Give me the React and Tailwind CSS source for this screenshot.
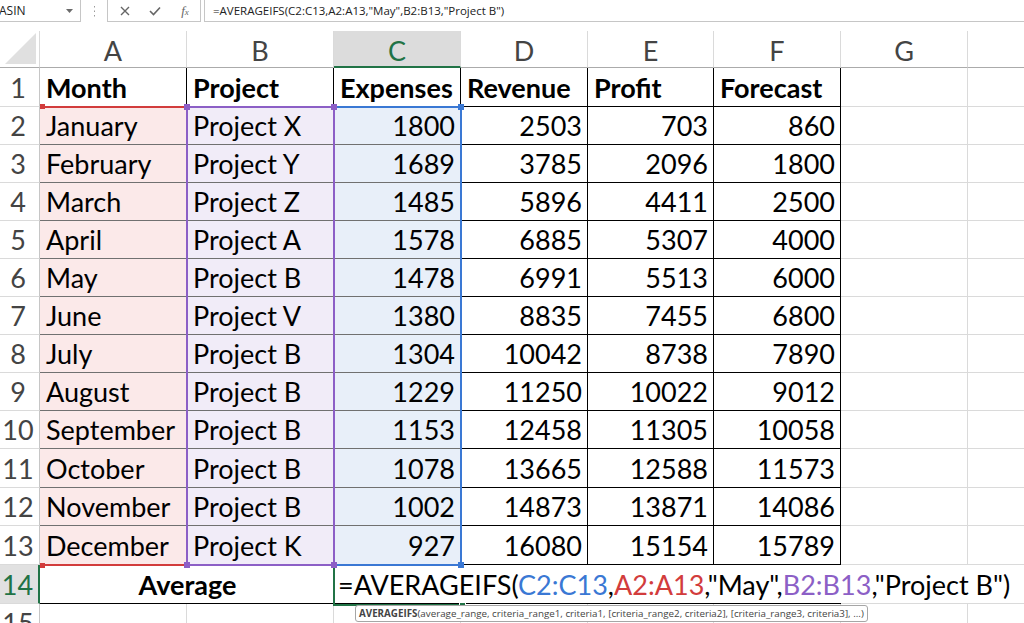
import React from "react";

const data = [
  ["January", "Project X", 1800, 2503, 703, 860],
  ["February", "Project Y", 1689, 3785, 2096, 1800],
  ["March", "Project Z", 1485, 5896, 4411, 2500],
  ["April", "Project A", 1578, 6885, 5307, 4000],
  ["May", "Project B", 1478, 6991, 5513, 6000],
  ["June", "Project V", 1380, 8835, 7455, 6800],
  ["July", "Project B", 1304, 10042, 8738, 7890],
  ["August", "Project B", 1229, 11250, 10022, 9012],
  ["September", "Project B", 1153, 12458, 11305, 10058],
  ["October", "Project B", 1078, 13665, 12588, 11573],
  ["November", "Project B", 1002, 14873, 13871, 14086],
  ["December", "Project K", 927, 16080, 15154, 15789],
];

const rowH = [
  "h-[38px]", "h-[38px]", "h-[38px]", "h-[38px]", "h-[38px]", "h-[38px]",
  "h-[38px]", "h-[38px]", "h-[38px]", "h-[39px]", "h-[38px]", "h-[39px]",
];

function TopBar() {
  return (
    <div className="flex h-[22px] items-stretch bg-white font-['Open_Sans',sans-serif] text-[#222]">
      <div className="w-[81px] border-r border-b border-[#c6c6c6] flex items-center justify-between pr-[7px]">
        <span className="text-[12px] leading-none -ml-[1px]">ASIN</span>
        <svg width="7" height="4" viewBox="0 0 7 4">
          <path d="M0 0 L7 0 L3.5 4 Z" fill="#6b6b6b" />
        </svg>
      </div>
      <div className="w-[26px] flex items-center justify-center">
        <svg width="3" height="11" viewBox="0 0 3 11">
          <rect x="1" y="0" width="1" height="1.5" fill="#9a9a9a" />
          <rect x="1" y="4.5" width="1" height="1.5" fill="#9a9a9a" />
          <rect x="1" y="9" width="1" height="1.5" fill="#9a9a9a" />
        </svg>
      </div>
      <div className="w-[94px] border-l border-r border-b border-[#c6c6c6] flex items-center">
        <div className="w-[32px] flex justify-center pl-[2px]">
          <svg width="10" height="10" viewBox="0 0 10 10">
            <path d="M1 1 L9 9 M9 1 L1 9" stroke="#666" strokeWidth="1.4" />
          </svg>
        </div>
        <div className="w-[30px] flex justify-center">
          <svg width="12" height="10" viewBox="0 0 12 10">
            <path d="M1 5 L4.5 8.5 L11 1.5" stroke="#666" strokeWidth="1.6" fill="none" />
          </svg>
        </div>
        <div className="w-[30px] flex justify-center items-center text-[#666] font-['Liberation_Serif',serif] italic leading-none">
          <span className="text-[13px]">f</span>
          <span className="text-[9px] mt-[4px]">x</span>
        </div>
      </div>
      <div className="flex-1 ml-[3px] border-l border-b border-[#c6c6c6] flex items-center pl-[8px]">
        <span className="text-[11.5px] leading-none whitespace-nowrap">
          =AVERAGEIFS(C2:C13,A2:A13,"May",B2:B13,"Project B")
        </span>
      </div>
    </div>
  );
}

function HeaderRow() {
  const base =
    "h-[37px] border-r border-r-[#dadada] border-b border-b-[#ababab] flex items-center justify-center pt-[3px] text-[#444]";
  return (
    <div className="flex h-[37px] text-[27px] leading-none">
      <div className="w-[40px] h-[37px] border-r border-r-[#dadada] border-b border-b-[#ababab] flex items-end justify-end pr-[3px] pb-[3px]">
        <svg width="31" height="31" viewBox="0 0 31 31">
          <path d="M31 0 L31 31 L0 31 Z" fill="#e0e0e0" />
        </svg>
      </div>
      <div className={"w-[147px] " + base}>A</div>
      <div className={"w-[147px] " + base}>B</div>
      <div className="w-[127px] h-[37px] bg-[#dcdcdc] border-r border-r-[#dadada] border-b-2 border-b-[#217346] flex items-center justify-center pt-[4px] text-[#217346]">
        C
      </div>
      <div className={"w-[127px] " + base}>D</div>
      <div className={"w-[126px] " + base}>E</div>
      <div className={"w-[127px] " + base}>F</div>
      <div className={"w-[127px] " + base}>G</div>
      <div className="flex-1 h-[37px] border-b border-b-[#ababab]"></div>
    </div>
  );
}

function RowHead({ n, h }) {
  return (
    <div
      className={
        "w-[40px] " +
        h +
        " border-r border-r-[#c6c6c6] border-b border-b-[#dadada] flex items-center justify-center pr-[3px] text-[#444]"
      }
    >
      {n}
    </div>
  );
}

function Row1() {
  const c = "h-[39px] border-r border-b border-black flex items-center pl-[6px] font-bold";
  return (
    <div className="flex h-[39px] text-[27px] leading-none">
      <RowHead n={1} h="h-[39px]" />
      <div className={"w-[147px] " + c}>Month</div>
      <div className={"w-[147px] " + c}>Project</div>
      <div className={"w-[127px] " + c}>Expenses</div>
      <div className={"w-[127px] " + c}>Revenue</div>
      <div className={"w-[126px] " + c}>Profit</div>
      <div className={"w-[127px] " + c}>Forecast</div>
      <div className="w-[127px] h-[39px] border-r border-b border-[#dadada]"></div>
      <div className="flex-1 h-[39px] border-b border-[#dadada]"></div>
    </div>
  );
}

function DataRow({ r, i }) {
  const h = rowH[i];
  const num = "border-r border-b border-black flex items-center justify-end pr-[5px]";
  return (
    <div className={"flex text-[27px] leading-none " + h}>
      <RowHead n={i + 2} h={h} />
      <div className={"w-[147px] bg-[#fbe9e9] border-r border-b border-[#707070] flex items-center pl-[6px] " + h}>
        {r[0]}
      </div>
      <div className={"w-[147px] bg-[#f1ecf8] border-r border-b border-[#707070] flex items-center pl-[6px] " + h}>
        {r[1]}
      </div>
      <div className={"w-[127px] bg-[#e8eff9] border-r border-b border-[#707070] flex items-center justify-end pr-[5px] " + h}>
        {r[2]}
      </div>
      <div className={"w-[127px] " + num + " " + h}>{r[3]}</div>
      <div className={"w-[126px] " + num + " " + h}>{r[4]}</div>
      <div className={"w-[127px] " + num + " " + h}>{r[5]}</div>
      <div className={"w-[127px] border-r border-b border-[#dadada] " + h}></div>
      <div className={"flex-1 border-b border-[#dadada] " + h}></div>
    </div>
  );
}

function Row14() {
  return (
    <div className="flex h-[39px] text-[27px] leading-none">
      <div className="w-[40px] h-[39px] bg-[#e1e1e1] border-r-2 border-r-[#217346] border-b border-b-[#dadada] flex items-center justify-center pr-[3px] text-[#217346]">
        14
      </div>
      <div className="w-[294px] h-[39px] border-r border-b border-black flex items-center justify-center font-bold pl-[2px]">
        Average
      </div>
      <div className="w-[127px] h-[39px] border-b border-black flex items-center pl-[4px]">
        <span className="relative z-10 whitespace-nowrap">
          =AVERAGEIFS(
          <span className="text-[#3a78d4]">C2:C13</span>,
          <span className="text-[#d23c3c]">A2:A13</span>,"May",
          <span className="text-[#8c5fc6]">B2:B13</span>,"Project B")
        </span>
      </div>
      <div className="w-[127px] h-[39px] border-b border-black"></div>
      <div className="w-[126px] h-[39px] border-b border-black"></div>
      <div className="w-[127px] h-[39px] border-b border-black"></div>
      <div className="w-[127px] h-[39px] border-b border-[#dadada]"></div>
      <div className="flex-1 h-[39px] border-b border-[#dadada]"></div>
    </div>
  );
}

function Row15() {
  return (
    <div className="flex h-[38px] text-[27px] leading-none">
      <RowHead n={15} h="h-[38px]" />
      <div className="w-[147px] h-[38px] border-r border-b border-[#dadada]"></div>
      <div className="w-[147px] h-[38px] border-r border-b border-[#dadada]"></div>
      <div className="w-[127px] h-[38px] border-r border-b border-[#dadada]"></div>
      <div className="w-[127px] h-[38px] border-r border-b border-[#dadada]"></div>
      <div className="w-[126px] h-[38px] border-r border-b border-[#dadada]"></div>
      <div className="w-[127px] h-[38px] border-r border-b border-[#dadada]"></div>
      <div className="w-[127px] h-[38px] border-r border-b border-[#dadada]"></div>
      <div className="flex-1 h-[38px] border-b border-[#dadada]"></div>
    </div>
  );
}

function Corners({ color }) {
  const s = "absolute w-[6px] h-[6px] " + color;
  return (
    <>
      <div className={s + " -left-[4px] -top-[4px]"} />
      <div className={s + " -right-[4px] -top-[4px]"} />
      <div className={s + " -left-[4px] -bottom-[4px]"} />
      <div className={s + " -right-[4px] -bottom-[4px]"} />
    </>
  );
}

export default function App() {
  return (
    <div className="w-[1024px] h-[623px] overflow-hidden bg-white font-['Lato',sans-serif] text-black">
      <TopBar />
      <div className="h-[9px]" />
      <div className="relative">
        <HeaderRow />
        <Row1 />
        {data.map((r, i) => (
          <DataRow key={i} r={r} i={i} />
        ))}
        <Row14 />
        <Row15 />

        {/* active cell C14 */}
        <div className="absolute left-[333px] top-[533px] w-[129px] h-[42px] border-l-2 border-b-2 border-[#217346] pointer-events-none">
          <div className="absolute -right-[4px] -bottom-[5px] w-[7px] h-[7px] bg-[#217346] border border-white" />
        </div>

        {/* range highlights */}
        <div className="absolute left-[333px] top-[75px] w-[129px] h-[460px] border-2 border-[#3a78d4] pointer-events-none">
          <Corners color="bg-[#3a78d4]" />
        </div>
        <div className="absolute left-[40px] top-[75px] w-[148px] h-[460px] border-t-2 border-b-2 border-r-2 border-[#d23c3c] pointer-events-none">
          <div className="absolute w-[5px] h-[5px] bg-[#d23c3c] left-[0px] -top-[4px]" />
          <div className="absolute w-[5px] h-[5px] bg-[#d23c3c] left-[0px] -bottom-[4px]" />
        </div>
        <div className="absolute left-[186px] top-[75px] w-[149px] h-[460px] border-2 border-[#8c5fc6] pointer-events-none">
          <Corners color="bg-[#8c5fc6]" />
        </div>

        {/* tooltip */}
        <div className="absolute left-[355px] top-[574px] h-[17px] px-[3px] bg-white border border-[#a6a6a6] rounded-[3px] flex items-center font-['Open_Sans',sans-serif] text-[9.8px] leading-none text-[#444] whitespace-nowrap z-20">
          <span className="font-bold">AVERAGEIFS</span>
          (average_range, criteria_range1, criteria1, [criteria_range2, criteria2], [criteria_range3, criteria3], ...)
        </div>
      </div>
    </div>
  );
}
